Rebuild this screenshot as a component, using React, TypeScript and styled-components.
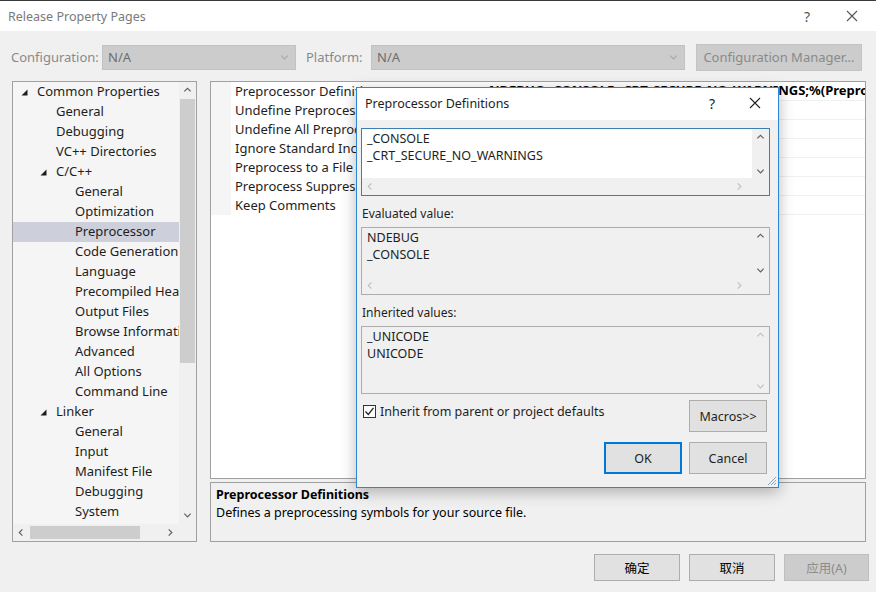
import React from "react";
import styled, { createGlobalStyle } from "styled-components";

const FONT = `"Noto Sans", "Noto Sans CJK SC", sans-serif`;

const GlobalStyle = createGlobalStyle`
  html, body {
    margin: 0;
    padding: 0;
    background: #f0f0f0;
  }
  body {
    font-family: ${FONT};
    font-size: 12.5px;
    color: #000;
  }
`;

const treeItems: { label: string; level: number; expanded?: boolean; selected?: boolean }[] = [
  { label: "Common Properties", level: 0, expanded: true },
  { label: "General", level: 1 },
  { label: "Debugging", level: 1 },
  { label: "VC++ Directories", level: 1 },
  { label: "C/C++", level: 1, expanded: true },
  { label: "General", level: 2 },
  { label: "Optimization", level: 2 },
  { label: "Preprocessor", level: 2, selected: true },
  { label: "Code Generation", level: 2 },
  { label: "Language", level: 2 },
  { label: "Precompiled Headers", level: 2 },
  { label: "Output Files", level: 2 },
  { label: "Browse Information", level: 2 },
  { label: "Advanced", level: 2 },
  { label: "All Options", level: 2 },
  { label: "Command Line", level: 2 },
  { label: "Linker", level: 1, expanded: true },
  { label: "General", level: 2 },
  { label: "Input", level: 2 },
  { label: "Manifest File", level: 2 },
  { label: "Debugging", level: 2 },
  { label: "System", level: 2 },
];

const gridRows = [
  { name: "Preprocessor Definitions", value: "NDEBUG;_CONSOLE;_CRT_SECURE_NO_WARNINGS;%(PreprocessorDefinitions)" },
  { name: "Undefine Preprocessor Definitions", value: "" },
  { name: "Undefine All Preprocessor Definitions", value: "" },
  { name: "Ignore Standard Include Paths", value: "" },
  { name: "Preprocess to a File", value: "" },
  { name: "Preprocess Suppress Line Numbers", value: "" },
  { name: "Keep Comments", value: "" },
];

type Dir = "up" | "down" | "left" | "right";

const Chevron = ({ dir, color = "#606060" }: { dir: Dir; color?: string }) => {
  const d = {
    up: "M1.5 6 L5 2.5 L8.5 6",
    down: "M1.5 3 L5 6.5 L8.5 3",
    left: "M6 1.5 L2.5 5 L6 8.5",
    right: "M3 1.5 L6.5 5 L3 8.5",
  }[dir];
  return (
    <svg width="9" height="9" viewBox="0 0 10 10">
      <path d={d} fill="none" stroke={color} strokeWidth="1.3" />
    </svg>
  );
};

const Triangle = () => (
  <svg width="7" height="7" viewBox="0 0 7 7">
    <path d="M6.5 0.5 L6.5 6.5 L0.5 6.5 Z" fill="#1e1e1e" />
  </svg>
);

export default function App() {
  return (
    <>
      <GlobalStyle />
      <Window>
        <TitleBar>
          <TitleText>Release Property Pages</TitleText>
          <TitleButtons>
            <TitleGlyph>?</TitleGlyph>
            <CloseGlyph>
              <svg width="12" height="12" viewBox="0 0 12 12">
                <path d="M1 1 L11 11 M11 1 L1 11" stroke="#555" strokeWidth="1.1" />
              </svg>
            </CloseGlyph>
          </TitleButtons>
        </TitleBar>

        <Body>
          <ConfigRow>
            <ConfigLabel $width={90}>Configuration:</ConfigLabel>
            <Combo $width={194}>
              <span>N/A</span>
              <Chevron dir="down" color="#a8a8a8" />
            </Combo>
            <ConfigLabel $width={64} $gapLeft={11}>
              Platform:
            </ConfigLabel>
            <Combo $width={314}>
              <span>N/A</span>
              <Chevron dir="down" color="#a8a8a8" />
            </Combo>
            <ManagerButton>Configuration Manager...</ManagerButton>
          </ConfigRow>

          <Main>
            <Tree>
              <TreeBody>
                <TreeList>
                  {treeItems.map((it, i) => (
                    <TreeRow key={i} $selected={!!it.selected}>
                      <TreeIndent $level={it.level}>
                        {it.expanded ? <Triangle /> : null}
                      </TreeIndent>
                      <TreeLabel>{it.label}</TreeLabel>
                    </TreeRow>
                  ))}
                </TreeList>
                <VScroll>
                  <ArrowBox>
                    <Chevron dir="up" />
                  </ArrowBox>
                  <VTrack>
                    <VThumb />
                  </VTrack>
                  <ArrowBox>
                    <Chevron dir="down" />
                  </ArrowBox>
                </VScroll>
              </TreeBody>
              <HScrollRow>
                <HScroll>
                  <ArrowBox>
                    <Chevron dir="left" />
                  </ArrowBox>
                  <HTrack>
                    <HThumb />
                  </HTrack>
                  <ArrowBox>
                    <Chevron dir="right" />
                  </ArrowBox>
                </HScroll>
                <Corner />
              </HScrollRow>
            </Tree>

            <RightColumn>
              <Grid>
                {gridRows.map((r, i) => (
                  <GridRow key={i}>
                    <Gutter />
                    <NameCell>{r.name}</NameCell>
                    <ValueCell>{r.value}</ValueCell>
                  </GridRow>
                ))}
              </Grid>
              <Description>
                <DescTitle>Preprocessor Definitions</DescTitle>
                <DescText>Defines a preprocessing symbols for your source file.</DescText>
              </Description>
            </RightColumn>
          </Main>

          <Footer>
            <FooterButton>确定</FooterButton>
            <FooterButton>取消</FooterButton>
            <FooterButton $disabled $width={85}>
              应用(A)
            </FooterButton>
          </Footer>
        </Body>

        <Dialog>
          <DialogTitle>
            <span>Preprocessor Definitions</span>
            <TitleButtons $gap={34}>
              <TitleGlyph $dark>?</TitleGlyph>
              <CloseGlyph>
                <svg width="12" height="12" viewBox="0 0 12 12">
                  <path d="M1 1 L11 11 M11 1 L1 11" stroke="#222" strokeWidth="1.1" />
                </svg>
              </CloseGlyph>
            </TitleButtons>
          </DialogTitle>
          <DialogBody>
            <TextBox $focused>
              <TextBoxMain>
                <TextLines>
                  <div>_CONSOLE</div>
                  <div>_CRT_SECURE_NO_WARNINGS</div>
                </TextLines>
                <BoxVScroll>
                  <Chevron dir="up" />
                  <Chevron dir="down" />
                </BoxVScroll>
              </TextBoxMain>
              <BoxHScroll>
                <Chevron dir="left" color="#c0c0c0" />
                <Chevron dir="right" color="#c0c0c0" />
              </BoxHScroll>
            </TextBox>

            <FieldLabel>Evaluated value:</FieldLabel>
            <TextBox $readonly>
              <TextBoxMain>
                <TextLines>
                  <div>NDEBUG</div>
                  <div>_CONSOLE</div>
                </TextLines>
                <BoxVScroll>
                  <Chevron dir="up" />
                  <Chevron dir="down" />
                </BoxVScroll>
              </TextBoxMain>
              <BoxHScroll>
                <Chevron dir="left" color="#c0c0c0" />
                <Chevron dir="right" color="#c0c0c0" />
              </BoxHScroll>
            </TextBox>

            <FieldLabel>Inherited values:</FieldLabel>
            <TextBox $readonly>
              <TextBoxMain>
                <TextLines>
                  <div>_UNICODE</div>
                  <div>UNICODE</div>
                </TextLines>
                <BoxVScroll>
                  <Chevron dir="up" color="#c0c0c0" />
                  <Chevron dir="down" color="#c0c0c0" />
                </BoxVScroll>
              </TextBoxMain>
            </TextBox>

            <CheckRow>
              <CheckLabel>
                <CheckBox>
                  <svg width="11" height="11" viewBox="0 0 11 11">
                    <path d="M1.5 5.5 L4.3 8.5 L9.5 1.8" fill="none" stroke="#222" strokeWidth="1.3" />
                  </svg>
                </CheckBox>
                Inherit from parent or project defaults
              </CheckLabel>
              <DialogButton>Macros&gt;&gt;</DialogButton>
            </CheckRow>

            <DialogActions>
              <DialogButton $primary>OK</DialogButton>
              <DialogButton>Cancel</DialogButton>
            </DialogActions>
          </DialogBody>
          <Grip>
            <svg width="10" height="10" viewBox="0 0 10 10">
              <path d="M9 1 L1 9 M9 4 L4 9 M9 7 L7 9" stroke="#8aa3bb" strokeWidth="1" />
            </svg>
          </Grip>
        </Dialog>
      </Window>
    </>
  );
}

const Window = styled.div`
  position: relative;
  width: 876px;
  height: 592px;
  overflow: hidden;
  background: #f0f0f0;
  border-top: 1px solid #3a3a3a;
  box-sizing: border-box;
  display: flex;
  flex-direction: column;
`;

const TitleBar = styled.div`
  height: 30px;
  background: #fff;
  display: flex;
  align-items: center;
  justify-content: space-between;
  padding: 0 18px 0 8px;
`;

const TitleText = styled.span`
  color: #7a7a7a;
  font-size: 12.5px;
`;

const TitleButtons = styled.div<{ $gap?: number }>`
  display: flex;
  align-items: center;
  gap: ${(p) => p.$gap ?? 36}px;
`;

const TitleGlyph = styled.span<{ $dark?: boolean }>`
  color: ${(p) => (p.$dark ? "#222" : "#555")};
  font-size: 14px;
`;

const CloseGlyph = styled.span`
  display: flex;
  align-items: center;
`;

const Body = styled.div`
  flex: 1;
  display: flex;
  flex-direction: column;
  padding: 13px 0 0 12px;
`;

const ConfigRow = styled.div`
  display: flex;
  align-items: center;
  height: 26px;
`;

const ConfigLabel = styled.span<{ $width: number; $gapLeft?: number }>`
  width: ${(p) => p.$width}px;
  margin-left: ${(p) => (p.$gapLeft ?? 0) - 1}px;
  padding-right: 1px;
  color: #8a8a8a;
  font-size: 13px;
`;

const Combo = styled.div<{ $width: number }>`
  width: ${(p) => p.$width}px;
  height: 25px;
  box-sizing: border-box;
  background: #cccccc;
  border: 1px solid #c2c2c2;
  display: flex;
  align-items: center;
  justify-content: space-between;
  padding: 0 6px 0 5px;
  color: #6d6d6d;
  font-size: 13px;
`;

const ManagerButton = styled.div`
  margin-left: 11px;
  width: 166px;
  height: 27px;
  box-sizing: border-box;
  background: #cccccc;
  border: 1px solid #c4c4c4;
  color: #8a8a8a;
  font-size: 13px;
  display: flex;
  align-items: center;
  justify-content: center;
`;

const Main = styled.div`
  display: flex;
  gap: 13px;
  margin-top: 11px;
  height: 461px;
`;

const Tree = styled.div`
  width: 185px;
  box-sizing: border-box;
  border: 1px solid #a0a0a0;
  background: #f5f5f5;
  display: flex;
  flex-direction: column;
`;

const TreeBody = styled.div`
  flex: 1;
  display: flex;
  min-height: 0;
`;

const TreeList = styled.div`
  flex: 1;
  overflow: hidden;
`;

const TreeRow = styled.div<{ $selected: boolean }>`
  height: 20px;
  display: flex;
  align-items: center;
  white-space: nowrap;
  background: ${(p) => (p.$selected ? "#cdd0db" : "transparent")};
`;

const TreeIndent = styled.span<{ $level: number }>`
  width: ${(p) => 24 + p.$level * 19}px;
  flex: none;
  display: flex;
  justify-content: flex-end;
  padding-right: 9px;
  box-sizing: border-box;
  padding-top: 1px;
`;

const TreeLabel = styled.span`
  font-size: 13px;
  color: #1e1e1e;
  margin-top: -2px;
`;

const VScroll = styled.div`
  width: 17px;
  display: flex;
  flex-direction: column;
  background: #f0f0f0;
`;

const ArrowBox = styled.div`
  width: 17px;
  height: 17px;
  display: flex;
  align-items: center;
  justify-content: center;
  flex: none;
`;

const VTrack = styled.div`
  flex: 1;
  padding: 0 1px;
`;

const VThumb = styled.div`
  height: 264px;
  background: #cdcdcd;
`;

const HScrollRow = styled.div`
  display: flex;
  height: 17px;
`;

const HScroll = styled.div`
  flex: 1;
  display: flex;
  align-items: center;
  background: #f0f0f0;
`;

const HTrack = styled.div`
  flex: 1;
  padding: 1px 0;
  height: 15px;
  box-sizing: border-box;
`;

const HThumb = styled.div`
  width: 110px;
  height: 100%;
  background: #cdcdcd;
`;

const Corner = styled.div`
  width: 17px;
  background: #f0f0f0;
`;

const RightColumn = styled.div`
  width: 656px;
  display: flex;
  flex-direction: column;
  gap: 3px;
`;

const Grid = styled.div`
  flex: 1;
  background: #fff;
  border: 1px solid #a0a0a0;
  overflow: hidden;
`;

const GridRow = styled.div`
  display: flex;
  height: 19px;
  align-items: center;
`;

const Gutter = styled.div`
  width: 20px;
  height: 100%;
  background: #f5f5f5;
  flex: none;
`;

const NameCell = styled.div`
  width: 252px;
  padding-left: 4px;
  margin-top: -2px;
  white-space: nowrap;
  overflow: hidden;
  font-size: 13px;
  color: #1e1e1e;
  flex: none;
`;

const ValueCell = styled.div`
  flex: 1;
  height: 100%;
  box-sizing: border-box;
  border-bottom: 1px solid #f0f0f0;
  padding-left: 2px;
  white-space: nowrap;
  overflow: hidden;
  font-weight: 700;
  font-size: 13px;
  line-height: 17px;
`;

const Description = styled.div`
  height: 60px;
  box-sizing: border-box;
  border: 1px solid #a0a0a0;
  padding: 3px 5px;
`;

const DescTitle = styled.div`
  font-weight: 700;
  font-size: 12.5px;
  line-height: 18px;
`;

const DescText = styled.div`
  font-size: 12.5px;
  line-height: 18px;
`;

const Footer = styled.div`
  display: flex;
  justify-content: flex-end;
  gap: 9px;
  padding: 0 7px 0 0;
  margin-top: 12px;
`;

const FooterButton = styled.div<{ $disabled?: boolean; $width?: number }>`
  width: ${(p) => p.$width ?? 86}px;
  height: 27px;
  box-sizing: border-box;
  background: ${(p) => (p.$disabled ? "#cccccc" : "#e1e1e1")};
  border: 1px solid ${(p) => (p.$disabled ? "#bfbfbf" : "#adadad")};
  color: ${(p) => (p.$disabled ? "#8c8c8c" : "#000")};
  display: flex;
  align-items: center;
  justify-content: center;
  font-size: 12.5px;
`;

const Dialog = styled.div`
  position: absolute;
  left: 356px;
  top: 86px;
  width: 423px;
  height: 401px;
  box-sizing: border-box;
  border: 1px solid #2b87d3;
  background: #f0f0f0;
  box-shadow: 0 4px 14px rgba(0, 0, 0, 0.28);
  display: flex;
  flex-direction: column;
`;

const DialogTitle = styled.div`
  height: 32px;
  box-sizing: border-box;
  background: #fff;
  display: flex;
  align-items: center;
  justify-content: space-between;
  padding: 0 17px 2px 8px;
  font-size: 12.5px;
  color: #1e1e1e;
  flex: none;
`;

const DialogBody = styled.div`
  flex: 1;
  padding: 8px 8px 0 4px;
  display: flex;
  flex-direction: column;
`;

const TextBox = styled.div<{ $focused?: boolean; $readonly?: boolean }>`
  border: 1px solid ${(p) => (p.$focused ? "#3c7fb1" : "#adadad")};
  background: ${(p) => (p.$readonly ? "#f0f0f0" : "#fff")};
  display: flex;
  flex-direction: column;
  height: 68px;
  box-sizing: border-box;
`;

const TextBoxMain = styled.div`
  flex: 1;
  display: flex;
`;

const TextLines = styled.div`
  flex: 1;
  padding: 1px 5px;
  font-size: 12.5px;
  line-height: 17px;
  color: #1e1e1e;
`;

const BoxVScroll = styled.div`
  width: 17px;
  display: flex;
  flex-direction: column;
  justify-content: space-between;
  align-items: center;
  padding: 4px 0 2px;
  background: #f0f0f0;
`;

const BoxHScroll = styled.div`
  height: 17px;
  flex: none;
  display: flex;
  align-items: center;
  justify-content: space-between;
  padding: 0 25px 0 4px;
  background: #f0f0f0;
`;

const FieldLabel = styled.div`
  font-size: 12px;
  color: #1e1e1e;
  margin: 10px 0 5px 1px;
  line-height: 16px;
`;

const CheckRow = styled.div`
  display: flex;
  align-items: center;
  justify-content: space-between;
  margin-top: 6px;
  padding-right: 3px;
`;

const CheckLabel = styled.label`
  display: flex;
  align-items: center;
  gap: 4px;
  font-size: 12.5px;
  color: #1e1e1e;
  margin-top: -9px;
  padding-left: 2px;
`;

const CheckBox = styled.span`
  width: 13px;
  height: 13px;
  box-sizing: border-box;
  border: 1px solid #333;
  background: #fff;
  display: flex;
  align-items: center;
  justify-content: center;
`;

const DialogActions = styled.div`
  display: flex;
  justify-content: flex-end;
  gap: 7px;
  margin-top: 10px;
  padding-right: 3px;
`;

const DialogButton = styled.div<{ $primary?: boolean }>`
  width: 78px;
  height: 32px;
  box-sizing: border-box;
  background: #e1e1e1;
  border: ${(p) => (p.$primary ? "2px solid #0078d7" : "1px solid #adadad")};
  display: flex;
  align-items: center;
  justify-content: center;
  font-size: 12.5px;
  color: #1e1e1e;
`;

const Grip = styled.div`
  position: absolute;
  right: 1px;
  bottom: 1px;
  display: flex;
`;
